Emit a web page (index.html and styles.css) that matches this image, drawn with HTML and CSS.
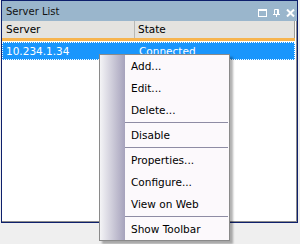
FILE: index.html
```html
<!DOCTYPE html>
<html lang="en">
<head>
    <meta charset="UTF-8">
    <title>Server List</title>
    <link rel="stylesheet" href="styles.css">
</head>
<body>
    <div class="panel">
        <div class="titlebar">
            <span class="title">Server List</span>
            <div class="tools">
                <svg width="9" height="8" viewBox="0 0 9 8"><rect x="0.5" y="0.5" width="8" height="7" fill="none" stroke="#fff"/><rect x="0" y="0" width="9" height="2" fill="#fff"/></svg>
                <svg width="9" height="8" viewBox="0 0 9 8"><path d="M2.5 0.5h4v5h-4z M1 5.5h7 M4.5 5.5v2.5" fill="none" stroke="#fff"/><path d="M5.5 0.5v5" stroke="#fff"/></svg>
                <svg width="9" height="8" viewBox="0 0 9 8"><path d="M1 0.5l7 7 M8 0.5l-7 7" stroke="#fff" stroke-width="2"/></svg>
            </div>
        </div>
        <div class="list">
            <div class="head">
                <div class="col server">Server</div>
                <div class="col state">State</div>
            </div>
            <div class="row selected">
                <div class="cell server">10.234.1.34</div>
                <div class="cell state">Connected</div>
            </div>
        </div>
    </div>

    <ul class="menu">
        <li>Add...</li>
        <li>Edit...</li>
        <li>Delete...</li>
        <li class="sep"></li>
        <li>Disable</li>
        <li class="sep"></li>
        <li>Properties...</li>
        <li>Configure...</li>
        <li>View on Web</li>
        <li class="sep"></li>
        <li>Show Toolbar</li>
    </ul>
</body>
</html>
```

FILE: styles.css
```css
body {
    margin: 0;
    background-color: #efefef;
    font-family: "DejaVu Sans", Verdana, sans-serif;
    font-size: 10.5px;
}

.panel {
    width: 297px;
    height: 223px;
    margin-left: 1px;
    box-sizing: border-box;
    border: 1px solid #0e206c;
    display: flex;
    flex-direction: column;
}

.titlebar {
    height: 20px;
    background-color: #9ab6cc;
    display: flex;
    align-items: center;
    padding-left: 4px;
}

.title {
    color: #111;
    font-size: 10px;
}

.tools {
    margin-left: auto;
    margin-right: 2px;
    padding-top: 4px;
    display: flex;
    gap: 5px;
}

.list {
    flex: 1;
    background-color: #fff;
    border-right: 1px solid #8c8c8c;
    border-bottom: 1px solid #8c8c8c;
}

.head {
    display: flex;
    height: 17px;
    line-height: 17px;
    background-color: #e4e3df;
    border-bottom: 3px solid #f7b44e;
    margin-right: 1px;
}

.server {
    width: 133px;
    padding-left: 4px;
    box-sizing: border-box;
}

.col.server {
    border-right: 1px solid #b8b8b4;
}

.state {
    flex: 1;
    padding-left: 3px;
}

.col.state {
    border-right: 1px solid #9c9c98;
}

.row {
    display: flex;
    height: 18px;
    line-height: 18px;
    margin-top: 1px;
    margin-right: 1px;
}

.row .state {
    padding-left: 4px;
}

.selected {
    background-color: #1a96fc;
    color: #fff;
    outline: 1px dotted #fff;
    outline-offset: -1px;
}

.menu {
    position: absolute;
    left: 99px;
    top: 54px;
    width: 131px;
    box-sizing: border-box;
    margin: 0;
    padding: 0;
    list-style: none;
    border: 1px solid #8a8a8a;
    background: linear-gradient(to right, #f4f4f6 0, #a6a2bc 25px, #fcf9fc 25px);
    box-shadow: 3px 3px 2px rgba(0, 0, 0, 0.3);
}

.menu li {
    height: 22px;
    line-height: 22px;
    padding-left: 31px;
}

.menu .sep {
    height: 1px;
    padding: 0;
    margin: 1px 1px 1px 25px;
    background-color: #8e8ca4;
}
```
